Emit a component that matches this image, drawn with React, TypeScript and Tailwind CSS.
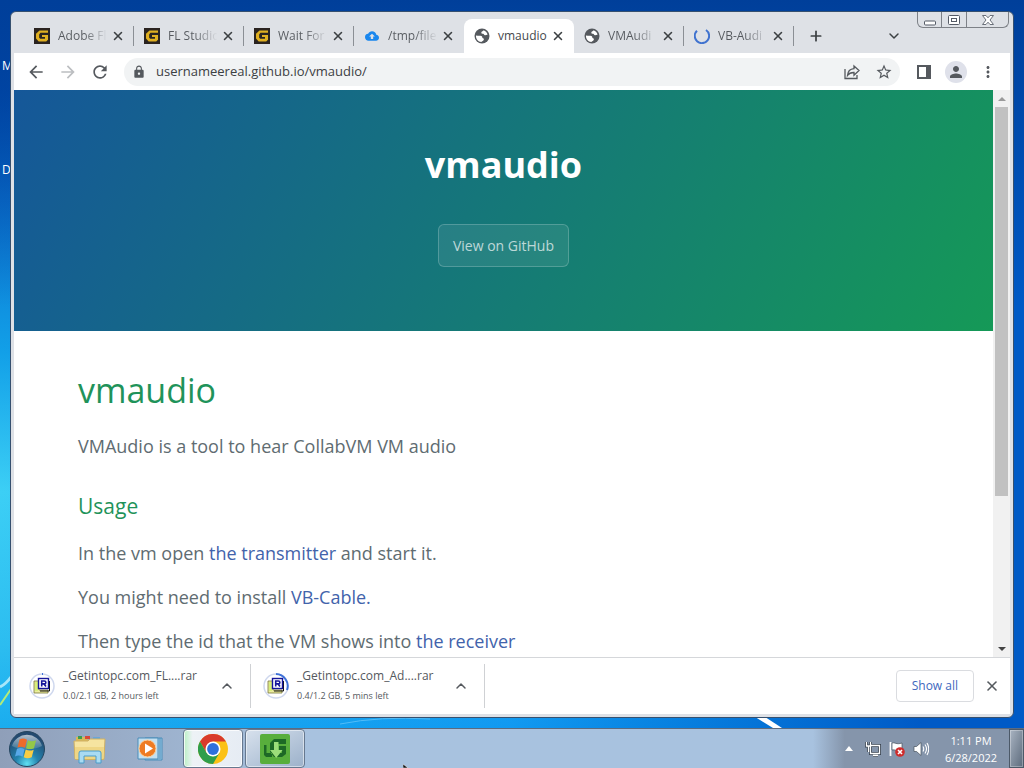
import type { ReactNode } from 'react';
import { X, Plus, ChevronDown, ChevronUp } from 'lucide-react';
import { MdArrowBack, MdArrowForward, MdRefresh, MdLock, MdStarBorder, MdPerson, MdMoreVert, MdCloudUpload } from 'react-icons/md';

const GetIcon = () => (
  <svg viewBox="0 0 16 16" className="size-4" aria-hidden="true">
    <rect width="16" height="16" fill="#2a2320" />
    <path d="M14 4.800V2.500H5.500L2 5.700v4.900L4.700 13.500h7.500L14 11.800V7H8v2h3v1.700H6.200l-1-1V6.500l1.200-1.700z" fill="#e0b021" />
  </svg>
);

const Globe = () => (
  <svg viewBox="0 0 16 16" className="size-4" aria-hidden="true">
    <circle cx="8" cy="8" r="7.500" fill="#55595e" />
    <path d="M2 7.500c1.500.3 3 .4 4.300.3 1.500 0 2 .8 2 1.700s1.400.6 1.600 1.600c.2 1.200-1.300 2.300-2.600 2.900C4.200 14 1.700 11 2 7.500z" fill="#fff" />
    <path d="M9.500 2.200c-.3 1.200-2 1-2.200 2.200-.2 1 .8 1.300 1.800 1.300s.8 1.500 1.900 1.600c1 .1 1.400-.6 2.600-.4C13.200 4.600 11.700 2.800 9.500 2.200z" fill="#fff" />
  </svg>
);

const Spinner = () => (
  <svg viewBox="0 0 16 16" className="size-4" aria-hidden="true">
    <path d="M3 2.700A7.200 7.200 0 1 0 12 2" fill="none" stroke="#3f72cf" strokeWidth="2" />
  </svg>
);

type TabInfo = { title: string; icon: ReactNode; active?: boolean; divider?: boolean };

const tabs: TabInfo[] = [
  { title: 'Adobe Fl', icon: <GetIcon />, divider: true },
  { title: 'FL Studio', icon: <GetIcon />, divider: true },
  { title: 'Wait For', icon: <GetIcon />, divider: true },
  { title: '/tmp/file', icon: <MdCloudUpload className="size-3.5 text-[#1a87ee]" /> },
  { title: 'vmaudio', icon: <Globe />, active: true },
  { title: 'VMAudi', icon: <Globe />, divider: true },
  { title: 'VB-Audi', icon: <Spinner />, divider: true },
];

function Tab({ title, icon, active, divider }: TabInfo) {
  return (
    <div
      className={
        active
          ? 'flex h-full w-[110px] shrink-0 items-center rounded-t-lg bg-white pr-2 pl-2.5'
          : 'relative flex h-full w-[110px] shrink-0 items-center pr-2 pl-2.5'
      }
    >
      <button type="button" role="tab" aria-selected={!!active} className="flex min-w-0 flex-1 items-center gap-2 text-left">
        <span className="grid w-4 shrink-0 place-items-center">{icon}</span>
        <span
          className={
            active
              ? 'flex-1 text-xs whitespace-nowrap text-[#45494d]'
              : 'flex-1 bg-linear-to-r from-[#55595e] from-50% to-transparent to-95% bg-clip-text text-xs whitespace-nowrap text-transparent'
          }
        >
          {title}
        </span>
      </button>
      <button type="button" aria-label={`Close ${title}`} className="grid w-4 shrink-0 place-items-center">
        <X className="size-3.5 text-[#3c4043]" strokeWidth={2.6} />
      </button>
      {divider && <span className="absolute right-0 h-5 w-px bg-[#8b8f95]" />}
    </div>
  );
}

function WindowButtons() {
  return (
    <div className="absolute top-0 right-1 flex h-4 divide-x divide-[#7d8187] rounded-b-md border border-t-0 border-[#7d8187]">
      <button type="button" aria-label="Minimize" className="grid w-6 place-items-center">
        <svg viewBox="0 0 14 12" className="h-3 w-3.5" aria-hidden="true"><rect x="1.5" y="7" width="11" height="4" rx="1" fill="#fff" stroke="#555b66" /></svg>
      </button>
      <button type="button" aria-label="Restore" className="grid w-[25px] place-items-center">
        <svg viewBox="0 0 14 12" className="h-3 w-3.5" aria-hidden="true"><rect x="1.5" y="1.5" width="11" height="9" rx="1" fill="#fff" stroke="#555b66" /><rect x="4.500" y="4.500" width="5" height="3" fill="none" stroke="#555b66" /></svg>
      </button>
      <button type="button" aria-label="Close" className="grid w-[41px] place-items-center">
        <svg viewBox="0 0 14 12" className="h-3 w-3.5" aria-hidden="true"><path d="M1.500 1.500h3.500l2 2.300 2-2.300h3.500L9 6l3.500 4.500H9L7 8.200l-2 2.300H1.500L5 6z" fill="#fff" stroke="#6a707a" /></svg>
      </button>
    </div>
  );
}

function Toolbar() {
  return (
    <div className="flex h-[37px] shrink-0 items-center bg-white pr-3 pl-3 text-[#55595e]">
      <button type="button" aria-label="Back" className="grid w-5 place-items-center"><MdArrowBack className="size-5" /></button>
      <button type="button" aria-label="Forward" className="ml-3 grid w-5 place-items-center text-[#bcbec1]"><MdArrowForward className="size-5" /></button>
      <button type="button" aria-label="Reload" className="ml-3 grid w-5 place-items-center"><MdRefresh className="size-5" /></button>
      <div className="ml-3.5 flex h-7 flex-1 items-center rounded-full bg-[#f1f3f4] pr-1.5 pl-2">
        <MdLock className="size-3.5" />
        <input
          aria-label="Address"
          defaultValue="usernameereal.github.io/vmaudio/"
          className="ml-2.5 min-w-0 flex-1 bg-transparent text-[13px] text-[#3c4043] outline-none"
        />
        <button type="button" aria-label="Share" className="grid w-5 place-items-center">
          <svg viewBox="0 0 18 18" className="size-[18px]" fill="none" stroke="currentColor" strokeWidth="1.300" aria-hidden="true">
            <path d="M2 6v9.500h12V12M4.500 12.500c.3-4 2.500-6.500 6.500-6.800V3l5 4.600-5 4.600V9.500c-3-.1-5 .8-6.500 3z" />
          </svg>
        </button>
        <button type="button" aria-label="Bookmark" className="ml-3 grid w-5 place-items-center"><MdStarBorder className="size-[18px]" /></button>
      </div>
      <button type="button" aria-label="Side panel" className="ml-3.5 grid w-5 place-items-center">
        <svg viewBox="0 0 14 14" className="size-3.5" aria-hidden="true"><path d="M0 0h14v14H0zM2 2v10h7V2z" fill="currentColor" fillRule="evenodd" /></svg>
      </button>
      <button type="button" aria-label="Profile" className="ml-[11px] grid size-[22px] place-items-center rounded-full bg-[#dfe1ea]"><MdPerson className="size-[18px]" /></button>
      <button type="button" aria-label="Menu" className="ml-[11px] grid w-5 place-items-center"><MdMoreVert className="size-[18px]" /></button>
    </div>
  );
}

function Page() {
  return (
    <div className="flex min-h-0 flex-1 bg-white">
      <div className="min-w-0 flex-1 overflow-hidden">
        <header className="flex h-[241px] flex-col items-center bg-linear-[120deg] from-[#155799] to-[#159957] pt-12 text-white">
          <h1 className="text-4xl leading-[54px] font-bold">vmaudio</h1>
          <a href="#github" className="mt-8 rounded-md border border-white/20 bg-white/8 px-3.5 py-2.5 text-sm leading-[21px] text-white/70">
            View on GitHub
          </a>
        </header>
        <main className="flex flex-col px-16 pt-8 text-lg leading-7 text-[#606c71]">
          <h1 className="text-[34px] leading-[54px] text-[#1f935a]">vmaudio</h1>
          <p className="mt-[15px]">VMAudio is a tool to hear CollabVM VM audio</p>
          <h2 className="mt-[29px] text-[21px] leading-[34px] text-[#1f935a]">Usage</h2>
          <p className="mt-4">In the vm open <a href="#transmitter" className="text-[#4263ab]">the transmitter</a> and start it.</p>
          <p className="mt-4">You might need to install <a href="#cable" className="text-[#4263ab]">VB-Cable.</a></p>
          <p className="mt-4">Then type the id that the VM shows into <a href="#receiver" className="text-[#4263ab]">the receiver</a></p>
        </main>
      </div>
      <div className="flex w-[17px] shrink-0 flex-col items-center bg-[#f1f1f1]">
        <button type="button" aria-label="Scroll up" className="grid h-[17px] shrink-0 place-items-center">
          <svg viewBox="0 0 8 4" className="h-1 w-2" aria-hidden="true"><path d="M0 4l4-4 4 4z" fill="#9a9a9a" /></svg>
        </button>
        <div className="flex w-[13px] flex-1 flex-col"><div className="h-[73%] bg-[#c1c1c1]" /></div>
        <button type="button" aria-label="Scroll down" className="grid h-[17px] shrink-0 place-items-center">
          <svg viewBox="0 0 8 4" className="h-1 w-2" aria-hidden="true"><path d="M0 0l4 4 4-4z" fill="#444" /></svg>
        </button>
      </div>
    </div>
  );
}

function Download({ name, status, arc }: { name: string; status: string; arc: string }) {
  return (
    <div className="flex h-11 w-[222px] shrink-0 items-center border-r border-[#cfd1d4] pr-[15px]">
      <svg viewBox="0 0 26 26" className="size-[26px] shrink-0" aria-hidden="true">
        <circle cx="13" cy="13" r="12" fill="#fff" stroke="#cfd8ee" strokeWidth="1.500" />
        <path d={arc} fill="none" stroke="#3f72d8" strokeWidth="2" />
        <path d="M5 8h5v9h9v3H5z" fill="#ececa0" stroke="#77773a" strokeWidth=".8" />
        <path d="M6 9h3v9H6z" fill="#d8ee7a" />
        <path d="M20.500 8v10H11" fill="none" stroke="#111" />
        <rect x="9.500" y="5.500" width="10" height="10" fill="#fff" stroke="#15159a" strokeWidth="1.400" />
        <path d="M12.700 13.500v-5.500h2.700a1.400 1.400 0 0 1 0 2.900h-2.700m2.300 0 2 2.600" fill="none" stroke="#15159a" strokeWidth="1.600" />
      </svg>
      <div className="ml-2 flex flex-1 flex-col whitespace-nowrap text-[#55595e]">
        <span className="text-xs leading-5">{name}</span>
        <span className="text-[9px] leading-5">{status}</span>
      </div>
      <button type="button" aria-label={`Options for ${name}`}><ChevronUp className="size-4 text-[#55595e]" strokeWidth={2.200} /></button>
    </div>
  );
}

const ChromeLogo = () => (
  <svg viewBox="0 0 30 30" className="size-[30px]" aria-hidden="true">
    <circle cx="15" cy="15" r="15" fill="#fbc116" />
    <path d="M2 7.500A15 15 0 0 1 28 7.500H15L8.500 18.800z" fill="#d93a2b" />
    <path d="M2 7.500A15 15 0 0 0 15 30l6.500-11.250L15 22.500 8.500 18.750z" fill="#2f9e4b" />
    <circle cx="15" cy="15" r="7.500" fill="#fff" />
    <circle cx="15" cy="15" r="5.900" fill="#2f70dc" />
  </svg>
);

function Taskbar() {
  return (
    <footer className="relative flex h-10 shrink-0 items-stretch border-t border-[#5c6b80] bg-linear-to-r from-[#8f9fb9] via-[#a8c2df] via-30% to-[#a8c2df]">
      <button type="button" aria-label="Start" className="ml-2 grid w-[38px] place-items-center">
        <svg viewBox="0 0 38 38" className="size-[38px]" aria-hidden="true">
          <defs>
            <radialGradient id="orb" cx="50%" cy="92%" r="80%"><stop offset="0" stopColor="#5fe0f2" /><stop offset=".4" stopColor="#2383ae" /><stop offset="1" stopColor="#234a70" /></radialGradient>
            <linearGradient id="gloss" x2="0" y2="1"><stop offset="0" stopColor="#fff" stopOpacity=".65" /><stop offset="1" stopColor="#fff" stopOpacity=".1" /></linearGradient>
          </defs>
          <circle cx="19" cy="19" r="17.500" fill="url(#orb)" stroke="#24455f" />
          <path d="M4 16a15.500 15 0 0 1 30 0c-8 4-21 5-30 0z" fill="url(#gloss)" />
          <path d="M11.500 9.500c3-1.500 5-1 7.500.3l-2 8c-2.500-1.300-5-1.600-7.500-.3z" fill="#ee6b2b" />
          <path d="M20 10.200c2.500 1.200 5 1.300 8 0l-2 8c-3 1.300-5.500 1.100-8 0z" fill="#94c848" />
          <path d="M9 18.800c2.500-1.200 5-.9 7.600.4l-2 7.500c-2.600-1.300-5-1.500-7.600-.3z" fill="#58a8e8" />
          <path d="M17.700 19.600c2.500 1.200 5.200 1.300 8 .1l-2 7.500c-2.800 1.300-5.500 1.200-8 0z" fill="#f8cd45" />
        </svg>
      </button>
      <button type="button" aria-label="Explorer" className="ml-[26px] grid w-9 place-items-center">
        <svg viewBox="0 0 36 32" className="h-8 w-9" aria-hidden="true">
          <path d="M4 4h10l2 3h16v20H4z" fill="#d9b85a" />
          <path d="M6 3h4v3H6z" fill="#3e9e4e" /><path d="M13 3h5v3h-5z" fill="#d8493a" /><path d="M21 4h7v4h-7z" fill="#6aa6d8" />
          <path d="M2 8h14l2-2h15l-1 20H3z" fill="#f6e4a0" stroke="#cfb062" />
          <path d="M3 14h29l-.6 12H3z" fill="#efd684" />
          <path d="M7 30V20q0-2 2-2h18q2 0 2 2v10h-5v-7H12v7z" fill="#a9dbf2" stroke="#4a9cca" />
        </svg>
      </button>
      <button type="button" aria-label="Media player" className="ml-7 grid w-8 place-items-center">
        <svg viewBox="0 0 32 30" className="h-[30px] w-8" aria-hidden="true">
          <path d="M9 4h17v22H9z" fill="#9cc9e6" stroke="#4b8db9" /><path d="M2 4h20v21H2zM24 4v21" fill="#c4e0f0" stroke="#4b8db9" />
          <circle cx="11.500" cy="14.500" r="8.500" fill="#ee7b22" stroke="#fbd2a0" /><path d="M9 9.500v10l8-5z" fill="#fff" />
        </svg>
      </button>
      <button type="button" aria-label="Chrome" className="ml-[15px] grid w-[60px] place-items-center rounded-sm border border-[#66788f] bg-linear-to-r from-[#b9f0c4] via-[#edf2f6] via-15% to-[#e6ecf4] inset-ring inset-ring-white/80"><ChromeLogo /></button>
      <button type="button" aria-label="Download manager" className="ml-0.5 grid w-[60px] place-items-center rounded-sm border border-[#66788f] bg-linear-to-br from-[#d7e1ed] to-[#9cb1ca] inset-ring inset-ring-white/50">
        <svg viewBox="0 0 30 30" className="size-[30px]" aria-hidden="true">
          <rect width="30" height="30" rx="2" fill="#58ae3c" />
          <path d="M4 11h2.500v8H12v4H6l-2-2zM26 5H14l-4 4v9l4 5h8l4-3v-8h-7v4h3v3h-7v-9h11z" fill="#1d6826" />
          <path d="M14 8h4.500v8h4L16.200 24 10 16h4z" fill="#9cdd7a" />
        </svg>
      </button>
      <div className="ml-auto flex items-center bg-linear-to-r from-transparent to-[#8595ab] to-15% pl-8 text-white">
        <button type="button" aria-label="Show hidden icons">
          <svg viewBox="0 0 8 5" className="h-[5px] w-2" aria-hidden="true"><path d="M0 5l4-5 4 5z" fill="#fff" /></svg>
        </button>
        <button type="button" aria-label="Network" className="ml-3">
          <svg viewBox="0 0 16 16" className="size-4" fill="none" aria-hidden="true">
            <path d="M5.500 4.500h9v8h-9zM8 14.500h5M1.500 1v4h4V1M3.500 5v6" stroke="#37424f" strokeWidth="3" />
            <path d="M5.500 4.500h9v8h-9zM8 14.500h5M1.500 1v4h4V1M3.500 5v6" stroke="#fff" strokeWidth="1.300" />
          </svg>
        </button>
        <button type="button" aria-label="Action center" className="ml-2">
          <svg viewBox="0 0 16 16" className="size-4" aria-hidden="true">
            <path d="M1.500 1v14" stroke="#fff" strokeWidth="1.800" /><path d="M3 2c3-1 4 2 10 0v7c-5 2-7-1-10 0z" fill="#fff" stroke="#46505c" strokeWidth=".7" />
            <circle cx="11" cy="11" r="4.800" fill="#cf2c2c" /><path d="M9 9l4 4m0-4-4 4" stroke="#fff" strokeWidth="1.600" />
          </svg>
        </button>
        <button type="button" aria-label="Volume" className="ml-2">
          <svg viewBox="0 0 16 16" className="size-4" fill="none" aria-hidden="true">
            <path d="M1 5.500h2.500L8 1.500v13l-4.500-4H1z" fill="#fff" stroke="#46505c" strokeWidth=".7" /><path d="M10 5.500q1.500 2.500 0 5M12 3.500q3 4.500 0 9M14 2q3.500 6 0 12" stroke="#fff" strokeWidth="1.100" />
          </svg>
        </button>
        <div className="ml-2.5 w-16 text-center text-[11px] leading-[17px]"><div>1:11 PM</div><div>6/28/2022</div></div>
        <button type="button" aria-label="Show desktop" className="ml-1.5 h-full w-[15px] border border-[#4c5968] bg-linear-to-br from-[#a9b4c2] to-[#5d6b7c] inset-ring inset-ring-white/30" />
      </div>
      <svg viewBox="0 0 8 4" className="absolute bottom-0 left-[403px] h-1 w-2" aria-hidden="true"><path d="M0 0l5 4H0z" fill="#111" stroke="#fff" strokeWidth=".5" /></svg>
    </footer>
  );
}

export default function App() {
  return (
    <div className="relative isolate flex h-screen flex-col overflow-hidden bg-[linear-gradient(#0047ab,#0050b4_12%,#0a72d0_26%,#12a0e8_46%,#3ccff5_64%,#2cbdf0_84%,#12a5ee)] font-['Open_Sans','Noto_Sans',sans-serif]">
      <div className="absolute inset-0 -z-10 bg-linear-to-r from-transparent via-[#0b8cf2]/60 via-50% to-[#005ac6] to-90%" />
      <div className="absolute inset-0 -z-10 bg-linear-to-b from-[#003f9a] to-transparent to-40%" />
      <svg viewBox="0 0 1024 80" className="absolute bottom-10 left-0 -z-10 h-20 w-full" aria-hidden="true">
        <path d="M752 67h10l20 13h-9z" fill="#fff" /><path d="M0 39Q6 36 11 29" stroke="#a7e6fa" strokeWidth="3" fill="none" /><path d="M0 57L11 41" stroke="#b3ec78" strokeWidth="2" />
        <path d="M340 76q40-8 90-5" stroke="#52bcf8" fill="none" />
      </svg>
      <span className="absolute top-[58px] left-0.5 -z-10 text-xs text-white">M</span>
      <span className="absolute top-[162px] left-0.5 -z-10 text-xs text-white">D</span>
      <div className="flex min-h-0 flex-1 px-2.5 pt-[11px] pb-2.5">
        <section className="relative flex min-w-0 flex-1 flex-col rounded-md border border-[#36506f] bg-[#dee1e6] px-[3px] pb-[3px]">
          <WindowButtons />
          <div role="tablist" className="flex h-[41px] shrink-0 items-center pt-[7px] pl-2.5">
            {tabs.map((tab) => <Tab key={tab.title} {...tab} />)}
            <button type="button" aria-label="New tab" className="ml-3.5 grid w-4 place-items-center"><Plus className="size-4 text-[#3c4043]" strokeWidth={2.600} /></button>
            <button type="button" aria-label="Search tabs" className="mr-[108px] ml-auto"><ChevronDown className="size-4 text-[#3c4043]" strokeWidth={2.200} /></button>
          </div>
          <Toolbar />
          <Page />
          <div className="flex h-[57px] shrink-0 items-center border-t border-[#d5d7da] bg-white pl-[15px]">
            <Download name="_Getintopc.com_FL....rar" status="0.0/2.1 GB, 2 hours left" arc="M13 1h1" />
            <div className="w-3 shrink-0" />
            <Download name="_Getintopc.com_Ad....rar" status="0.4/1.2 GB, 5 mins left" arc="M13 1A12 12 0 0 1 24 17" />
            <button type="button" className="ml-auto h-8 rounded-sm border border-[#dadce0] px-[15px] text-xs font-medium text-[#4068be]">Show all</button>
            <button type="button" aria-label="Close downloads" className="mr-2.5 ml-2.5"><X className="size-4 text-[#55595e]" strokeWidth={2.400} /></button>
          </div>
        </section>
      </div>
      <Taskbar />
    </div>
  );
}
